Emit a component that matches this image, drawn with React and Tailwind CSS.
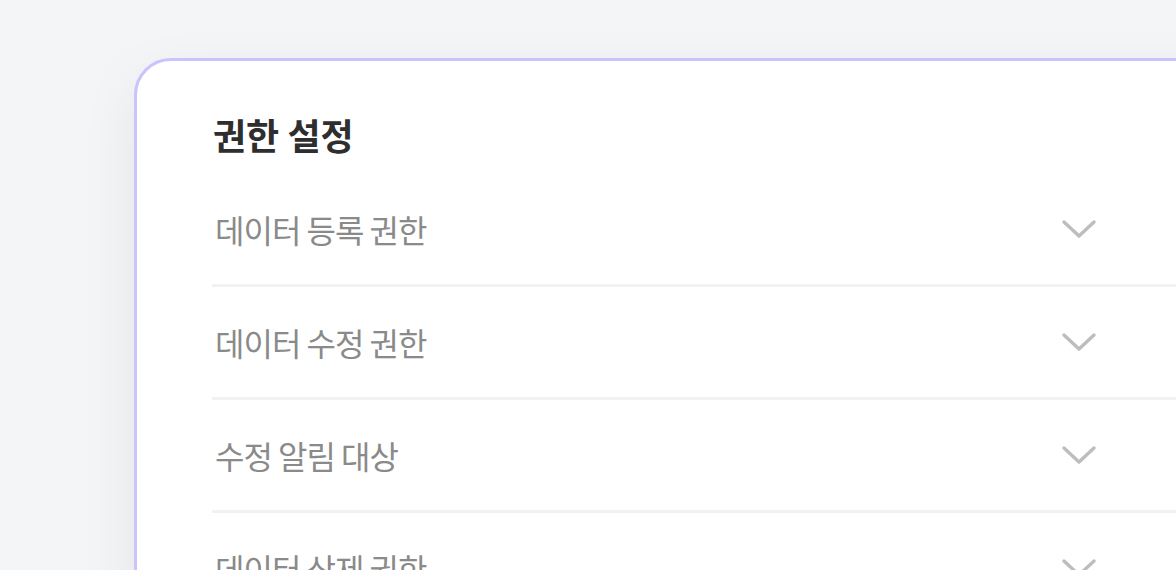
const rows = ["데이터 등록 권한", "데이터 수정 권한", "수정 알림 대상", "데이터 삭제 권한"];

function Chevron() {
  return (
    <svg width="36" height="20" viewBox="0 0 36 20" className="mr-[154px] shrink-0" fill="none">
      <polyline
        points="3,3 18,17 33,3"
        stroke="#bdbdbd"
        strokeWidth="3.4"
        strokeLinecap="round"
        strokeLinejoin="round"
      />
    </svg>
  );
}

export default function App() {
  return (
    <div
      className="h-[570px] w-[1176px] overflow-hidden bg-[#f4f5f7] pl-[134px] pt-[58px]"
      style={{ fontFamily: '"Noto Sans CJK KR", "Noto Sans", sans-serif' }}
    >
      <div className="w-[1120px] rounded-tl-[37px] rounded-tr-[37px] border-[3px] border-[#cac3fd] bg-white pl-[76px] pt-[49px] shadow-[0_20px_60px_rgba(0,0,0,0.07)]">
        <h1 className="text-[36px] font-bold leading-[48px] text-[#2e2e2e]">권한 설정</h1>
        <div className="mt-[16px]">
          {rows.map((label) => (
            <div key={label}>
              <div className="flex h-[110px] items-center justify-between pl-[2px]">
                <span className="text-[32px] leading-none tracking-[-1px] text-[#8a8a8a]">{label}</span>
                <Chevron />
              </div>
              <div className="ml-[-1px] h-[3px] bg-[#f2f2f3]" />
            </div>
          ))}
        </div>
      </div>
    </div>
  );
}
